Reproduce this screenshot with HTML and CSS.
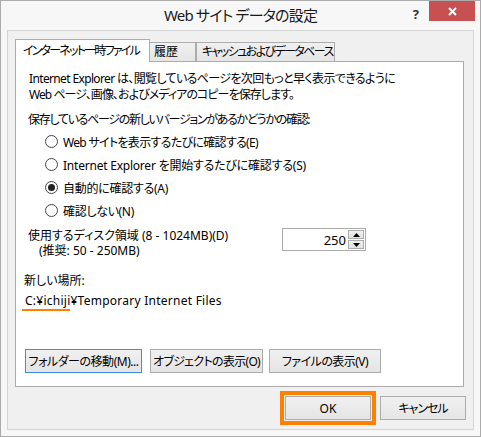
FILE: index.html
```html
<!DOCTYPE html>
<html lang="ja">
<head>
    <meta charset="UTF-8">
    <title>Web サイト データの設定</title>
    <link rel="stylesheet" href="styles.css">
</head>
<body>
    <div class="window">
        <div class="titlebar">
            <span></span>
            <span class="title">Web サイト データの設定</span>
            <div class="controls">
                <span class="help">?</span>
                <span class="close">
                    <svg width="9" height="9" viewBox="0 0 9 9"><path d="M1 1L8 8M8 1L1 8" stroke="#fff" stroke-width="2"/></svg>
                </span>
            </div>
        </div>

        <div class="client">
            <div class="tabs">
                <div class="tab active">インターネット一時ファイル</div>
                <div class="tab t2">履歴</div>
                <div class="tab t3">キャッシュおよびデータベース</div>
            </div>

            <div class="panel">
                <div class="intro">
                    <p class="l1">Internet Explorer は、閲覧しているページを次回もっと早く表示できるように</p>
                    <p class="l2">Web ページ、画像、およびメディアのコピーを保存します。</p>
                </div>
                <p class="question">保存しているページの新しいバージョンがあるかどうかの確認:</p>

                <div class="radios">
                    <div class="radio r1"><span class="dot"></span>Web サイトを表示するたびに確認する(E)</div>
                    <div class="radio r2"><span class="dot"></span>Internet Explorer を開始するたびに確認する(S)</div>
                    <div class="radio r3"><span class="dot on"></span>自動的に確認する(A)</div>
                    <div class="radio r4"><span class="dot"></span>確認しない(N)</div>
                </div>

                <div class="disk">
                    <div class="disk-label">
                        <div>使用するディスク領域 (8 - 1024MB)(D)</div>
                        <div class="hint">(推奨: 50 - 250MB)</div>
                    </div>
                    <div class="spin">
                        <span class="value">250</span>
                        <div class="arrows">
                            <span class="arrow"><svg width="7" height="4" viewBox="0 0 7 4"><path d="M0 4L3.5 0L7 4Z" fill="#000"/></svg></span>
                            <span class="arrow"><svg width="7" height="4" viewBox="0 0 7 4"><path d="M0 0L3.5 4L7 0Z" fill="#000"/></svg></span>
                        </div>
                    </div>
                </div>

                <div class="location">
                    <div>新しい場所:</div>
                    <div class="path"><span class="mark">C:¥ichiji</span>¥Temporary Internet Files</div>
                </div>

                <div class="actions">
                    <button class="btn focus w-move">フォルダーの移動(M)...</button>
                    <button class="btn w-obj">オブジェクトの表示(O)</button>
                    <button class="btn w-file">ファイルの表示(V)</button>
                </div>
            </div>

            <div class="footer">
                <button class="btn dlg ok">OK</button>
                <button class="btn dlg cancel">キャンセル</button>
            </div>
        </div>
    </div>
</body>
</html>
```

FILE: styles.css
```css
* {
    box-sizing: border-box;
    margin: 0;
    padding: 0;
}

body {
    margin: 0;
    background: #fff;
    font-family: "Noto Sans", "Noto Sans CJK JP", sans-serif;
    font-feature-settings: "palt";
    font-size: 12px;
    color: #000;
}

.window {
    width: 481px;
    height: 437px;
    border: 1px solid #ababab;
    background: #f7f7f7;
    display: flex;
    flex-direction: column;
}

.titlebar {
    height: 29px;
    display: grid;
    grid-template-columns: 1fr auto 1fr;
    align-items: start;
}

.title {
    font-size: 15px;
    line-height: 28px;
    letter-spacing: -0.8px;
    color: #1a1a1a;
}

.controls {
    display: flex;
    justify-content: flex-end;
    align-items: flex-start;
    padding-right: 5px;
}

.help {
    font-size: 13px;
    font-weight: bold;
    color: #333;
    line-height: 20px;
    margin: 3px 10px 0 0;
}

.close {
    width: 46px;
    height: 20px;
    background: #c75050;
    display: flex;
    align-items: center;
    justify-content: center;
}

.client {
    flex: 1;
    margin: 0 6px 6px;
    border: 1px solid #d5d5d5;
    background: #f0f0f0;
    padding: 8px 9px 9px 7px;
    display: flex;
    flex-direction: column;
}

/* タブ */
.tabs {
    display: flex;
    height: 22px;
    position: relative;
    z-index: 1;
}

.tab {
    border: 1px solid #acacac;
    border-bottom: none;
    line-height: 18px;
    padding-left: 7px;
    white-space: nowrap;
    overflow: hidden;
}

.tab.active {
    width: 135px;
    height: 23px;
    background: #fff;
    line-height: 22px;
    letter-spacing: -1.8px;
}

.tab.t2,
.tab.t3 {
    margin-top: 3px;
    height: 19px;
    background: linear-gradient(#f0f0f0, #e5e5e5);
}

.tab.t2 {
    width: 46px;
    border-left: none;
    padding-left: 4px;
}

.tab.t3 {
    width: 139px;
    padding-left: 5px;
    letter-spacing: -1.6px;
}

.panel {
    flex: 1;
    background: #fff;
    border: 1px solid #acacac;
    padding: 9px 0 13px 0;
    display: flex;
    flex-direction: column;
}

.intro {
    line-height: 16px;
    padding-left: 13px;
}

.intro .l1 {
    letter-spacing: -0.64px;
}

.intro .l2 {
    letter-spacing: -0.94px;
}

.question {
    line-height: 16px;
    margin-top: 9px;
    padding-left: 12px;
    letter-spacing: -1.3px;
}

.radios {
    margin-top: 2px;
    padding-left: 29px;
}

.radio {
    height: 23px;
    display: flex;
    align-items: center;
}

.radio.r1 {
    letter-spacing: -0.69px;
}

.radio.r2 {
    letter-spacing: -0.22px;
}

.radio.r3 {
    letter-spacing: -0.27px;
}

.radio.r4 {
    letter-spacing: -0.33px;
}

.dot {
    width: 13px;
    height: 13px;
    border: 1px solid #444;
    border-radius: 50%;
    background: #fff;
    margin-right: 5px;
    display: flex;
    align-items: center;
    justify-content: center;
}

.dot.on::after {
    content: "";
    width: 7px;
    height: 7px;
    border-radius: 50%;
    background: #222;
}

.disk {
    margin-top: 6px;
    display: flex;
    justify-content: space-between;
    align-items: flex-start;
    padding: 0 97px 0 12px;
}

.disk-label {
    line-height: 15px;
}

.hint {
    padding-left: 11px;
}

.spin {
    width: 84px;
    height: 23px;
    border: 1px solid #ababab;
    display: flex;
    align-items: center;
    justify-content: flex-end;
    padding-right: 1px;
}

.value {
    font-size: 13px;
    margin-right: 2px;
}

.arrows {
    display: flex;
    flex-direction: column;
    gap: 1px;
}

.arrow {
    width: 16px;
    height: 9px;
    border: 1px solid #acacac;
    background: linear-gradient(#f0f0f0, #e0e0e0);
    display: flex;
    align-items: center;
    justify-content: center;
}

.location {
    margin-top: 13px;
    padding-left: 8px;
    line-height: 20px;
}

.path {
    padding-left: 1px;
    letter-spacing: 0.25px;
}

.mark {
    position: relative;
}

.mark::after {
    content: "";
    position: absolute;
    left: -3px;
    right: 0;
    bottom: -2px;
    height: 2px;
    background: #ff8000;
}

.actions {
    margin-top: auto;
    display: flex;
    padding-left: 9px;
}

.btn {
    font: inherit;
    color: #000;
    height: 24px;
    padding: 0;
    border: 1px solid #acacac;
    background: linear-gradient(#f0f0f0, #e5e5e5);
    white-space: nowrap;
}

.btn.focus {
    border-color: #3c8fe6;
}

.w-move {
    width: 117px;
    letter-spacing: -0.48px;
}

.w-obj {
    width: 113px;
    margin-left: 8px;
    letter-spacing: -0.69px;
}

.w-file {
    width: 112px;
    margin-left: 6px;
    letter-spacing: -0.55px;
}

.footer {
    display: flex;
    justify-content: flex-end;
    gap: 9px;
    margin: 9px -2px 0 0;
}

.btn.dlg {
    width: 86px;
}

.btn.cancel {
    letter-spacing: -1px;
}

.btn.ok {
    outline: 4px solid #ff8000;
    outline-offset: 1px;
}
```
